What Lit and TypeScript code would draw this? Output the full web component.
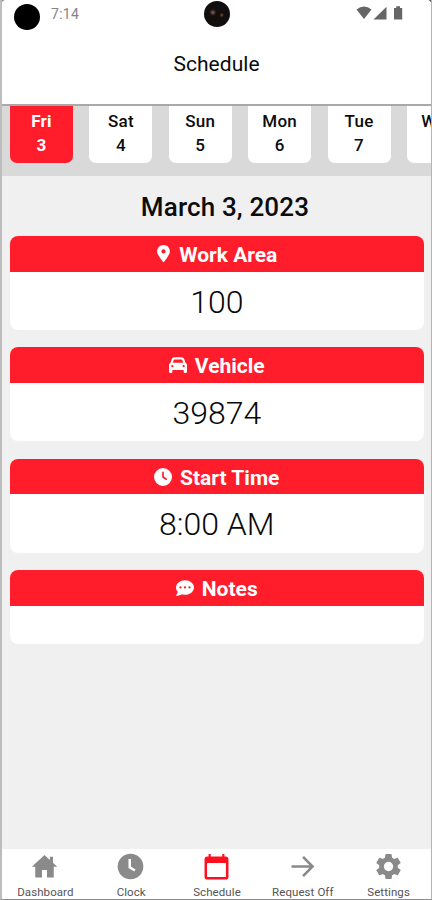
import { LitElement, html, css, svg } from "lit";
import { customElement, property } from "lit/decorators.js";

const icons: Record<string, unknown> = {
  pin: svg`<svg class="i-pin" viewBox="0 0 384 512"><path fill="currentColor" d="M192 0C86 0 0 86 0 192c0 87 117 243 168 307a30 30 0 0 0 48 0c51-64 168-220 168-307C384 86 298 0 192 0zm0 256a64 64 0 1 1 0-128 64 64 0 0 1 0 128z"/></svg>`,
  car: svg`<svg class="i-mid" viewBox="0 0 512 512"><path fill="currentColor" fill-rule="evenodd" d="M135 117 110 192H402L377 117C373 104 361 96 347 96H165c-14 0-26 8-30 21zM40 197 75 96C88 58 124 32 165 32H347c41 0 77 26 90 64l35 101c24 10 40 32 40 59V448c0 18-14 32-32 32H448c-18 0-32-14-32-32V400H96v48c0 18-14 32-32 32H32c-18 0-32-14-32-32V256c0-27 16-49 40-59zM96 320a32 32 0 1 0 0-64 32 32 0 0 0 0 64zm320 0a32 32 0 1 0 0-64 32 32 0 0 0 0 64z"/></svg>`,
  clock: svg`<svg class="i-mid" viewBox="0 0 512 512"><path fill="currentColor" fill-rule="evenodd" d="M256 0a256 256 0 1 1 0 512 256 256 0 0 1 0-512zm-24 120v136c0 8 4 16 11 20l96 64c24 14 44-20 26-40l-85-57V120c0-32-48-32-48 0z"/></svg>`,
  chat: svg`<svg class="i-mid" viewBox="0 0 512 512"><path fill="currentColor" fill-rule="evenodd" d="M256 448c141 0 256-93 256-208S397 32 256 32 0 125 0 240c0 45 18 87 48 121-3 32-18 62-36 84-12 14-6 35 13 35 50 0 92-20 119-36 34 3 72 4 112 4zM128 208a32 32 0 1 0 0 64 32 32 0 0 0 0-64zm128 0a32 32 0 1 0 0 64 32 32 0 0 0 0-64zm128 0a32 32 0 1 0 0 64 32 32 0 0 0 0-64z"/></svg>`,
  home: svg`<svg class="i-nav" viewBox="0 0 28 28"><path fill="currentColor" d="M14 2.2 0.8 14.2H4.4V25.4H11.4V17.6H16.6V25.4H23.6V14.2H27.2L22.8 10.2V4H19.6V7.3Z"/></svg>`,
  navclock: svg`<svg class="i-nav" viewBox="0 0 28 28"><circle cx="14" cy="14" r="13.3" fill="currentColor"/><path d="M13.2 6.3V14.8L18.6 18.2" fill="none" stroke="#fff" stroke-width="2.6"/></svg>`,
  calendar: svg`<svg class="i-nav" viewBox="0 0 28 28"><path fill="currentColor" fill-rule="evenodd" d="M5.8 1H8V3.6H20V1H22.2V3.6H23.4A3 3 0 0 1 26.4 6.6V24.6A3 3 0 0 1 23.4 27.6H4.6A3 3 0 0 1 1.6 24.6V6.6A3 3 0 0 1 4.6 3.6H5.8ZM4.2 10.4V24Q4.2 25 5.2 25H22.8Q23.8 25 23.8 24V10.4Z"/></svg>`,
  arrow: svg`<svg class="i-nav" viewBox="0 0 28 28"><path d="M2.6 14H24M14.6 4 24.4 14 14.6 24" fill="none" stroke="currentColor" stroke-width="2.7"/></svg>`,
  gear: svg`<svg class="i-nav" viewBox="1.6 1.6 20.8 20.8"><path fill="currentColor" d="M19.14 12.94c.04-.3.06-.61.06-.94 0-.32-.02-.64-.07-.94l2.03-1.58a.49.49 0 0 0 .12-.61l-1.92-3.32a.49.49 0 0 0-.59-.22l-2.39.96c-.5-.38-1.03-.7-1.62-.94l-.36-2.54a.48.48 0 0 0-.48-.41h-3.84a.47.47 0 0 0-.47.41l-.36 2.54c-.59.24-1.13.57-1.62.94l-2.39-.96a.48.48 0 0 0-.59.22L2.74 8.87a.47.47 0 0 0 .12.61l2.03 1.58a6 6 0 0 0 0 1.88l-2.03 1.58a.49.49 0 0 0-.12.61l1.92 3.32c.12.22.37.29.59.22l2.39-.96c.5.38 1.03.7 1.62.94l.36 2.54c.05.24.24.41.48.41h3.84c.24 0 .44-.17.47-.41l.36-2.54c.59-.24 1.13-.56 1.62-.94l2.39.96c.22.08.47 0 .59-.22l1.92-3.32a.47.47 0 0 0-.12-.61l-2.01-1.58zM12 15.6A3.6 3.6 0 1 1 12 8.4a3.6 3.6 0 0 1 0 7.2z"/></svg>`,
};

@customElement("info-card")
class InfoCard extends LitElement {
  @property() icon = "";
  @property() label = "";
  @property() value = "";

  static styles = css`
    :host { display: block; border-radius: 8px; overflow: hidden; background: #fff; }
    .head {
      height: 35.5px; background: #ff1c2b; color: #fff; display: flex; align-items: center;
      justify-content: center; font-size: 21px; font-weight: 700; line-height: 36px;
    }
    .head span { padding-top: 2px; }
    .i-pin { width: 13px; height: 17px; margin: 0 9px 0 1px; }
    .i-mid { width: 18px; height: 18px; margin-right: 8px; }
    .value { height: 58.5px; line-height: 61px; text-align: center; font-size: 32px; font-weight: 300; color: #080808; }
    .value.empty { height: 38.5px; }
  `;

  render() {
    return html`
      <div class="head">${icons[this.icon]}<span>${this.label}</span></div>
      <div class="value ${this.value ? "" : "empty"}">${this.value}</div>
    `;
  }
}

@customElement("app-root")
class AppRoot extends LitElement {
  static styles = css`
    :host { display: block; font-family: Roboto, "Liberation Sans", sans-serif; color: #0c0c0c; }
    .screen {
      box-sizing: border-box; width: 432px; height: 900px; overflow: hidden; position: relative;
      display: flex; flex-direction: column; background: #f0f0f0;
      border-left: 2px solid #bdbdbd; border-right: 1px solid #b4b4b4; border-bottom: 1px solid #8c8c8c;
    }
    .corner { position: absolute; top: 0; width: 5px; height: 7px; }
    .corner.l { left: -1px; background: radial-gradient(ellipse at 100% 100%, transparent 68%, #9a9a9a 76%); }
    .corner.r { right: -1px; background: radial-gradient(ellipse at 0 100%, transparent 68%, #666 76%); }
    .top { height: 104px; flex: none; background: #fff; border-bottom: 2px solid #a9a9a9; box-sizing: content-box; }
    .status { height: 35px; display: flex; align-items: flex-start; }
    .dot { width: 26px; height: 26px; border-radius: 50%; background: #000; margin: 4px 0 0 12px; }
    .time { font-size: 14px; line-height: 16px; letter-spacing: 0.3px; color: #858585; margin: 6px 0 0 11px; width: 40px; }
    .camera {
      width: 26px; height: 26px; border-radius: 50%; margin: 1px 0 0 113px;
      background: radial-gradient(circle at 34% 44%, #8a6a60 0, #3a2a26 9%, transparent 16%),
        radial-gradient(circle at 68% 54%, #8a4a1c 0, transparent 10%), #120e0d;
    }
    .sys { margin: 6px 0 0 126px; width: 48px; height: 15px; }
    .title { text-align: center; font-size: 21px; line-height: 28px; letter-spacing: 0.05px; margin-top: 15px; }
    .days { height: 70px; flex: none; background: #d9d9d9; display: flex; gap: 16.4px; padding-left: 8px; box-sizing: border-box; overflow: hidden; }
    .day {
      flex: none; width: 63px; height: 57px; background: #fff; border-radius: 0 0 7px 7px; text-align: center;
      font-size: 17px; line-height: 24px; font-weight: 500; padding-top: 2.5px; box-sizing: border-box; letter-spacing: 0.3px;
    }
    .day.on { background: #ff1c2b; color: #fff; font-weight: 700; }
    .date { text-align: center; font-size: 26px; font-weight: 500; line-height: 30px; letter-spacing: 0.15px; margin: 16px 0 14px; padding-left: 17px; flex: none; }
    .cards { flex: 1; display: flex; flex-direction: column; gap: 17.4px; padding: 0 7.5px 0 8px; }
    .nav { height: 50px; flex: none; background: #fff; display: flex; justify-content: space-between; }
    .tab { width: 86px; display: flex; flex-direction: column; align-items: center; color: #8a8a8a; }
    .tab.on { color: #ff0f1f; }
    .i-nav { width: 27px; height: 27px; margin-top: 4px; }
    .tab span { font-size: 11.5px; line-height: 14px; margin-top: 5px; padding-left: 1px; color: #555; white-space: nowrap; letter-spacing: 0.08px; }
  `;

  days = [["Fri", "3"], ["Sat", "4"], ["Sun", "5"], ["Mon", "6"], ["Tue", "7"], ["Wed", "8"]];
  tabs = [["home", "Dashboard"], ["navclock", "Clock"], ["calendar", "Schedule"], ["arrow", "Request Off"], ["gear", "Settings"]];

  render() {
    return html`
      <div class="screen">
        <div class="top">
          <div class="status">
            <div class="dot"></div>
            <div class="time">7:14</div>
            <div class="camera"></div>
            <svg class="sys" viewBox="0 0 48 15">
              <g fill="#666">
                <path d="M0.5 3.4Q8 -2.4 15.5 3.4L8 13Z" />
                <path d="M30.5 0.8V13.6H17.5Z" />
                <path d="M38 2H40.2V0.3H44V2H46.2V13.6H38Z" />
              </g>
            </svg>
          </div>
          <div class="title">Schedule</div>
        </div>
        <div class="days">
          ${this.days.map(([d, n], i) => html`<div class="day ${i === 0 ? "on" : ""}">${d}${n === "8" ? "" : html`<br />${n}`}</div>`)}
        </div>
        <div class="date">March 3, 2023</div>
        <div class="cards">
          <info-card icon="pin" label="Work Area" value="100"></info-card>
          <info-card icon="car" label="Vehicle" value="39874"></info-card>
          <info-card icon="clock" label="Start Time" value="8:00 AM"></info-card>
          <info-card icon="chat" label="Notes"></info-card>
        </div>
        <div class="nav">
          ${this.tabs.map(([i, t]) => html`<div class="tab ${i === "calendar" ? "on" : ""}">${icons[i]}<span>${t}</span></div>`)}
        </div>
        <div class="corner l"></div>
        <div class="corner r"></div>
      </div>
    `;
  }
}
